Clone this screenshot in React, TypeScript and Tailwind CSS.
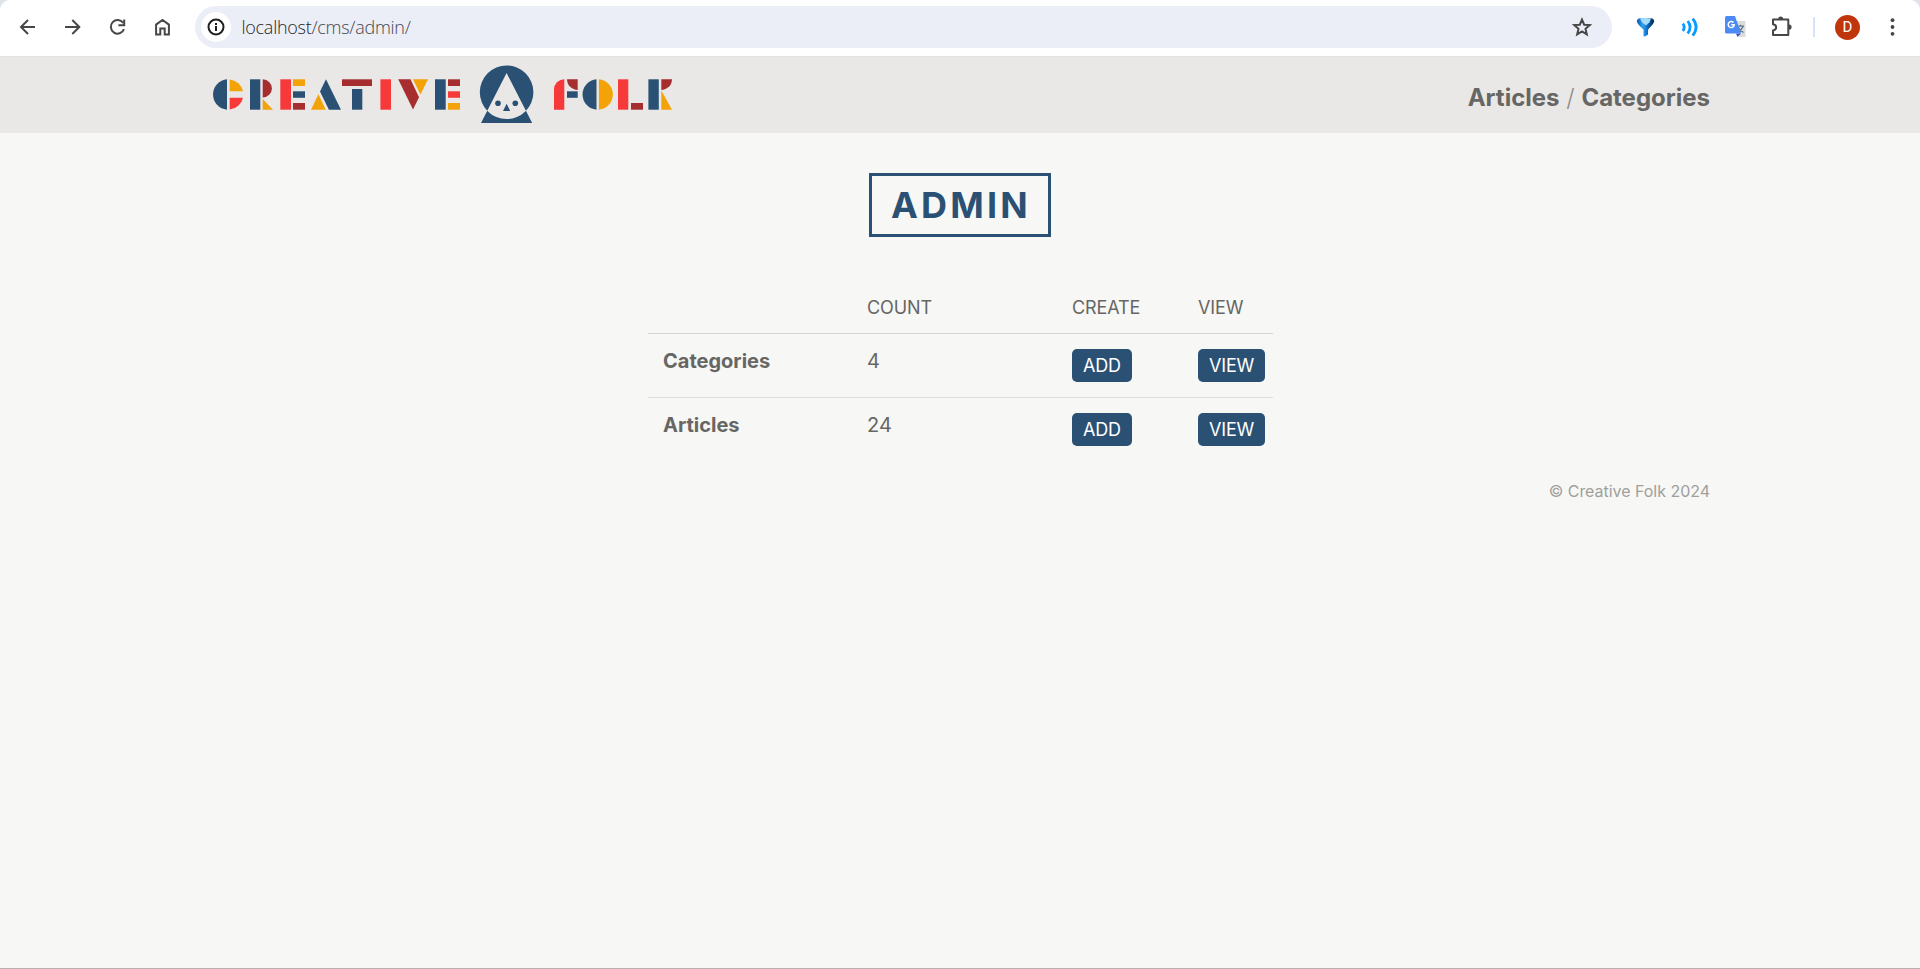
import type { ReactNode } from 'react';

const NAVY = '#2a5174';
const RED = '#f63a3a';
const MAROON = '#a62e2e';
const GOLD = '#f3a208';

function Logo() {
  return (
    <svg width="460" height="60" viewBox="213 64 460 60" className="block" aria-label="Creative Folk">
      <path fill={NAVY} d="M227 79.35A15.2 15.2 0 0 0 227 109.65Z" />
      <path fill={GOLD} d="M229.7 79.4A15.2 15.2 0 0 1 243 91.3H229.7Z" />
      <path fill={RED} d="M229.7 109.6A15.2 15.2 0 0 0 243 97.7H229.7Z" />
      <rect fill={NAVY} x="250" y="79.3" width="10.3" height="30.4" />
      <path fill={MAROON} d="M262.7 79.3A9.2 9.1 0 0 1 262.7 97.5Z" />
      <path fill={GOLD} d="M262.7 99L273 109.7H262.7Z" />
      <rect fill={RED} x="280.3" y="79.3" width="10.7" height="30.4" />
      <rect fill={GOLD} x="293" y="79.3" width="12" height="6.7" />
      <rect fill={NAVY} x="293" y="91.3" width="12" height="6.5" />
      <rect fill={MAROON} x="293" y="103" width="12" height="6.7" />
      <path fill={GOLD} d="M318.4 94.3L325.8 109.7H311Z" />
      <path fill={NAVY} d="M326 79.3L341 109.7H328.9L320 91.5Z" />
      <rect fill={MAROON} x="342" y="79.3" width="30" height="6.7" />
      <rect fill={NAVY} x="352" y="89" width="10.3" height="20.7" />
      <rect fill={RED} x="380.4" y="79.3" width="10.6" height="30.4" />
      <path fill={MAROON} d="M398.2 79.3H410.5L419 97.2L413 109.4Z" />
      <path fill={GOLD} d="M413 79.3H428L420.4 94.6Z" />
      <rect fill={NAVY} x="435" y="79.3" width="10.7" height="30.4" />
      <rect fill={MAROON} x="448" y="79.3" width="12" height="6.7" />
      <rect fill={RED} x="448" y="91.3" width="12" height="6.5" />
      <rect fill={GOLD} x="448" y="103" width="12" height="6.7" />
      <path
        fill={NAVY}
        fillRule="evenodd"
        d="M479.8 92.2A26.8 26.8 0 0 1 533.4 92.2A26.8 26.8 0 0 1 479.8 92.2ZM506.6 73L481 123H532.2Z"
      />
      <circle fill={NAVY} cx="498" cy="103.3" r="2.8" />
      <circle fill={NAVY} cx="515.3" cy="103.3" r="2.8" />
      <path fill={NAVY} d="M506.6 103.7L510.2 111H503Z" />
      <path fill={RED} d="M564.3 79.3V109.7H554V89.6A10.3 10.3 0 0 1 564.3 79.3Z" />
      <path fill={MAROON} d="M567 79.3H577.7V90A10.7 10.7 0 0 1 567 79.3Z" />
      <rect fill={NAVY} x="567" y="91.3" width="10.7" height="6.5" />
      <path fill={NAVY} d="M596.5 79.35A15.2 15.2 0 0 0 596.5 109.65Z" />
      <path fill={GOLD} d="M598.9 79.35A15.2 15.2 0 0 1 598.9 109.65Z" />
      <rect fill={RED} x="618" y="79.3" width="10.3" height="30.4" />
      <rect fill={MAROON} x="631" y="103" width="12" height="6.7" />
      <rect fill={NAVY} x="648.4" y="79.3" width="10.4" height="30.4" />
      <path fill={MAROON} d="M661.3 79.3H672A10.7 10.7 0 0 1 661.3 90Z" />
      <path fill={GOLD} d="M661.3 90.5L672 109.7H661.3Z" />
    </svg>
  );
}

function ToolIcon({ children }: { children: ReactNode }) {
  return (
    <svg width="24" height="24" viewBox="0 0 24 24" fill="none" stroke="#474747" strokeWidth="2" className="block shrink-0">
      {children}
    </svg>
  );
}

function BrowserBar() {
  return (
    <div className="h-14 shrink-0 bg-[#dfe3ea]">
      <div className="flex h-14 items-center rounded-t-[10px] bg-white pb-[2px] pl-4">
        <div className="flex w-[179px] gap-[21px]">
          <ToolIcon><path d="M19 12H5M12 5l-7 7 7 7" /></ToolIcon>
          <ToolIcon><path d="M4 12h14.3M11.300 5l7 7-7 7" /></ToolIcon>
          <ToolIcon>
            <path d="M17.2 7.900A6.800 6.800 0 1 0 18 14.200" />
            <path d="M18.200 4.500V10.300H12.400" />
          </ToolIcon>
          <ToolIcon><path d="M5.100 19.600V9.600L11.500 5l6.400 4.600v10h-4.200v-6H9.300v6Z" /></ToolIcon>
        </div>
        <div className="flex h-[42px] w-[1417px] items-center rounded-full bg-[#ebeef7] pl-[6px] pr-[18px]">
          <div className="flex size-[30px] items-center justify-center rounded-full bg-white">
            <svg width="18" height="18" viewBox="0 0 18 18" fill="none" stroke="#1f1f1f" strokeWidth="2">
              <circle cx="9" cy="9" r="7.5" />
              <path d="M9 8v5M9 5v2" />
            </svg>
          </div>
          <div className="ml-[10.5px] flex-1 font-['Open_Sans','Noto_Sans',sans-serif] text-[18px] leading-6 font-light tracking-[-0.27px] text-[#45494d]">
            <span className="text-[#1f1f1f]">localhost</span>/cms/admin/
          </div>
          <svg width="24" height="24" viewBox="0 0 24 24" fill="none" stroke="#474747" strokeWidth="2">
            <path d="M12 4.600l2.200 5.100 5.600.4-4.300 3.700 1.300 5.500-4.800-2.900-4.800 2.900 1.300-5.500-4.300-3.700 5.600-.4Z" />
          </svg>
        </div>
        <div className="ml-[24px] flex items-center">
          <svg width="20" height="20" viewBox="0 0 20 20">
            <defs>
              <linearGradient id="funnel" x1="0" x2="1" y1="0" y2="0">
                <stop offset="0" stopColor="#0757ad" />
                <stop offset="0.35" stopColor="#2fa4f3" />
                <stop offset="0.6" stopColor="#0b6dc8" />
                <stop offset="1" stopColor="#05223f" />
              </linearGradient>
            </defs>
            <path fill="url(#funnel)" d="M.8 4.500Q1 1.500 4 1.200L15 1.200Q18 1.500 18.200 4.500C17.500 7.500 14.500 9.500 12 12.700V17.500L8.500 19.700L7.500 18.500V12.700C4.500 9.500 1.500 7.500 .8 4.500Z" />
            <path fill="#a4dafa" d="M4 1.600Q9.500 .4 15 1.600L13.500 5.200L10 8.600L6 5.200Z" />
          </svg>
          <svg className="ml-[25px]" width="20" height="20" viewBox="0 0 20 20" fill="none" stroke="#0a9bff" strokeWidth="2.8">
            <path d="M1.800 6.700Q4.600 10 1.800 14M6.700 4Q11.500 10 6.700 16.500M11.700 1.700Q18.500 10 11.700 18.700" />
          </svg>
          <svg className="ml-[23.5px]" width="22" height="22" viewBox="0 0 22 22">
            <path fill="#dcdcdc" d="M9 5H20.500V21H14Z" />
            <path stroke="#607988" strokeWidth="1.300" fill="none" d="M12 10.200H19M15.500 8.700V10M18 10.500Q16.500 14.500 13 16.500M13.500 11.500Q15.500 15 18.500 16.500" />
            <path fill="#3e4fb0" d="M11 17.500H16L12.500 21Z" />
            <path fill="#4c8bf5" d="M1.500 0H10L16 17.500H1.500Q0 17.500 0 16V1.500Q0 0 1.500 0Z" />
            <path stroke="#fff" strokeWidth="1.500" fill="none" d="M8.500 6.600A3 3 0 1 0 9.200 8.700H6.200" />
          </svg>
          <svg className="ml-[24.5px]" width="22" height="22" viewBox="0 0 22 22" fill="none" stroke="#474747" strokeWidth="2">
            <path strokeLinejoin="round" d="M2 3.600H17.300V19H2V14.500C6.200 14 6.200 8.700 2 8.200Z" />
            <path fill="#474747" stroke="none" d="M7.200 3A2.500 2.500 0 0 1 12.200 3ZM18 8.500A2.600 2.600 0 0 1 18 13.700Z" />
          </svg>
          <div className="ml-[20px] h-5 w-[2px] bg-[#d3e3fd]" />
          <div className="ml-[20px] flex size-[25px] items-center justify-center rounded-full bg-[#bf360c] font-['Roboto',sans-serif] text-[15px] leading-none text-white">
            D
          </div>
          <svg className="ml-[30px]" width="5" height="18" viewBox="0 0 5 18" fill="#474747">
            <circle cx="2.500" cy="2.200" r="1.900" />
            <circle cx="2.500" cy="9" r="1.900" />
            <circle cx="2.500" cy="15.800" r="1.900" />
          </svg>
        </div>
      </div>
    </div>
  );
}

function Button({ children }: { children: ReactNode }) {
  return (
    <a className="inline-flex h-[33px] items-center rounded-[5px] bg-[#2a5174] px-[11px] text-[18px] leading-none tracking-[-0.15px] text-white">
      {children}
    </a>
  );
}

const COLS = 'grid grid-cols-[204px_205px_126px_90px]';

function Row({ label, count, last }: { label: string; count: number; last?: boolean }) {
  return (
    <div className={`${COLS} h-16 ${last ? '' : 'border-b border-[#dcdee3]'}`}>
      <div className="pt-[12px] pl-[15px] text-[20px] leading-[30px] font-bold">{label}</div>
      <div className="pt-[12px] pl-[15px] text-[20px] leading-[30px]">{count}</div>
      <div className="pt-[15px] pl-[15px]"><Button>ADD</Button></div>
      <div className="pt-[15px] pl-[15px]"><Button>VIEW</Button></div>
    </div>
  );
}

export default function App() {
  return (
    <div className="flex h-[969px] w-[1920px] flex-col overflow-hidden bg-[#f7f7f5] font-['Inter',sans-serif] text-[#666664]">
      <BrowserBar />
      <header className="flex h-[77px] shrink-0 items-start justify-between border-t border-[#e2e2e2] bg-[#e9e8e6] pr-[210px] pl-[213px]">
        <div className="pt-[7px]"><Logo /></div>
        <nav className="pt-[23px] text-[24px] leading-9 font-bold">
          <a>Articles</a>
          <span className="font-light text-[#8f8f8b]"> / </span>
          <a>Categories</a>
        </nav>
      </header>
      <main className="flex flex-1 flex-col items-center pt-10">
        <h1 className="flex h-16 w-[182px] items-center justify-center border-[3px] border-[#2a5174] pl-[2px] text-[36px] leading-none font-bold tracking-[3.2px] text-[#2a5174]">
          ADMIN
        </h1>
        <section className="mt-[46px] mr-[1295px] ml-[648px] w-[625px] shrink-0 self-start">
          <div className={`${COLS} h-[51px] border-b border-[#d4d6d8] text-[18px] leading-[27px] tracking-[-0.1px]`}>
            <div />
            <div className="pt-[11px] pl-[15px]">COUNT</div>
            <div className="pt-[11px] pl-[15px]">CREATE</div>
            <div className="pt-[11px] pl-[15px]">VIEW</div>
          </div>
          <Row label="Categories" count={4} />
          <Row label="Articles" count={24} last />
        </section>
        <footer className="mt-[17px] w-full pr-[210px] text-right text-[16px] leading-6 tracking-[-0.03px] text-[#9f9f9b]">
          © Creative Folk 2024
        </footer>
      </main>
      <div className="h-px shrink-0 bg-[#baaeb0]" />
    </div>
  );
}
